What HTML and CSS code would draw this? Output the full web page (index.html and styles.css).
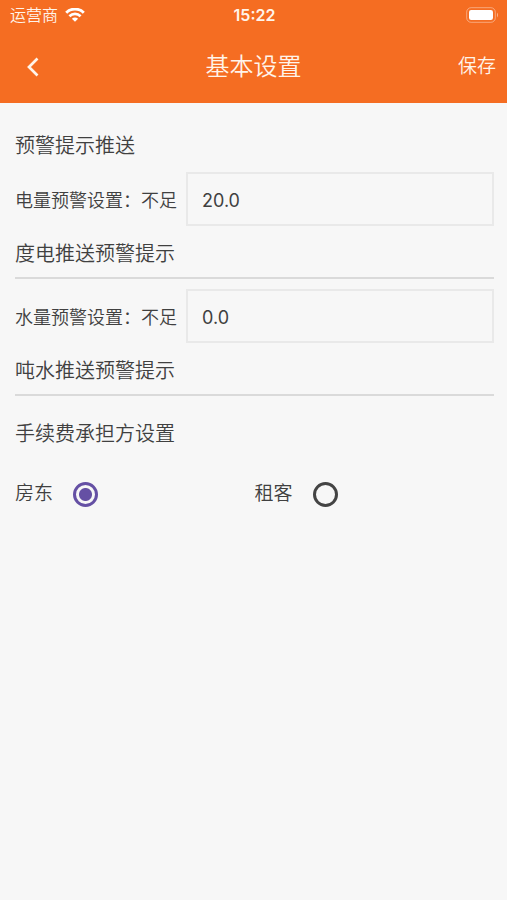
FILE: index.html
```html
<!DOCTYPE html>
<html lang="zh-CN">
<head>
<meta charset="utf-8">
<meta name="viewport" content="width=device-width, initial-scale=1">
<title>基本设置</title>
<link rel="stylesheet" href="styles.css">
</head>
<body>
<header class="header">
  <div class="status">
    <div class="carrier">
      <span>运营商</span>
      <svg class="wifi" viewBox="0 0 20 14" aria-hidden="true">
        <path d="M1.2 4.7C6 -.1 14 -.1 18.8 4.7" fill="none" stroke="currentColor" stroke-width="2.9"/>
        <path d="M4.400 8.200C7.600 5.200 12.400 5.200 15.600 8.200" fill="none" stroke="currentColor" stroke-width="2.7"/>
        <path d="M6.900 10.800C8.700 9.100 11.300 9.100 13.100 10.800L10 13.800Z" fill="currentColor"/>
      </svg>
    </div>
    <time class="clock">15:22</time>
    <svg class="battery" viewBox="0 0 33 16" aria-hidden="true">
      <rect x=".7" y=".7" width="28.6" height="14.6" rx="4.4" fill="none" stroke="#fff" stroke-opacity=".4"/>
      <rect x="3" y="3" width="24" height="10" rx="2.2" fill="#fff"/>
      <path d="M31 5.5Q33 8 31 10.500Z" fill="#fff" fill-opacity=".5"/>
    </svg>
  </div>
  <nav class="bar">
    <button class="back" type="button" aria-label="返回">
      <svg viewBox="0 0 12 20" aria-hidden="true"><path d="M10.500 1.500L2 10L10.500 18.500" fill="none" stroke="currentColor" stroke-width="2.7"/></svg>
    </button>
    <h1 class="title">基本设置</h1>
    <button class="save" type="submit" form="settings">保存</button>
  </nav>
</header>
<form class="settings" id="settings">
  <h2 class="heading">预警提示推送</h2>
  <section class="group">
    <div class="field">
      <label for="power">电量预警设置：不足</label>
      <input class="box" id="power" type="text" inputmode="decimal" value="20.0">
    </div>
    <p class="note">度电推送预警提示</p>
  </section>
  <section class="group">
    <div class="field">
      <label for="water">水量预警设置：不足</label>
      <input class="box" id="water" type="text" inputmode="decimal" value="0.0">
    </div>
    <p class="note">吨水推送预警提示</p>
  </section>
  <fieldset class="payer">
    <legend class="heading">手续费承担方设置</legend>
    <div class="options">
      <label class="option">房东<input class="radio" type="radio" name="payer" checked></label>
      <label class="option">租客<input class="radio" type="radio" name="payer"></label>
    </div>
  </fieldset>
</form>
</body>
</html>
```
FILE: styles.css
```css
* {
  box-sizing: border-box;
}

body {
  margin: 0;
  min-height: 100vh;
  background: #f7f7f7;
  color: #404040;
  font-family: Inter, "Noto Sans CJK SC", sans-serif;
  font-weight: 350;
}

button,
input {
  font: inherit;
  color: inherit;
}

.header {
  background: #f56d22;
  color: #fff4ea;
}

.status,
.bar {
  display: grid;
  grid-template-columns: 1fr auto 1fr;
  align-items: center;
}

.status {
  height: 28px;
  padding: 0 8px 0 10px;
}

.carrier {
  display: flex;
  align-items: center;
  gap: 7px;
  font-size: 16px;
  line-height: 30px;
}

.wifi {
  width: 20px;
  height: 14px;
  color: #fff;
}

.clock {
  font-size: 16px;
  font-weight: 600;
  line-height: 30px;
}

.battery {
  justify-self: end;
  width: 33px;
  height: 16px;
}

.bar {
  height: 75px;
  padding: 2px 11px 0;
}

.back,
.save {
  padding: 0;
  border: 0;
  background: none;
  cursor: pointer;
}

.back {
  display: flex;
  align-items: center;
  justify-content: center;
  width: 44px;
  height: 44px;
}

.back svg {
  width: 12px;
  height: 20px;
}

.title {
  margin: 0;
  font-size: 24px;
  font-weight: 350;
  line-height: 36px;
}

.save {
  justify-self: end;
  font-size: 19px;
  line-height: 28px;
}

.settings {
  padding: 28px 13px 28px 15px;
}

.heading,
.note {
  margin: 0;
  padding: 0;
  font-size: 20px;
  font-weight: 350;
  line-height: 30px;
}

.group {
  padding: 11px 0 8px;
  border-bottom: 2px solid #dadada;
}

.group + .group {
  padding-top: 10px;
}

.field {
  display: flex;
  align-items: center;
  gap: 9px;
  margin-bottom: 13px;
  font-size: 18px;
}

.field label {
  flex: none;
}

.box {
  flex: 1;
  min-width: 0;
  height: 54px;
  padding: 2px 14px 0;
  border: 2px solid #e9e9e9;
  border-radius: 0;
  background: transparent;
  outline: 0;
  font-weight: 400;
}

.payer {
  margin: 23px 0 0;
  padding: 0;
  border: 0;
}

.options {
  display: grid;
  grid-template-columns: 1fr 1fr;
  padding-top: 32px;
  font-size: 19px;
  line-height: 26px;
}

.option {
  display: flex;
  align-items: center;
  gap: 20px;
}

.radio {
  appearance: none;
  width: 25px;
  height: 25px;
  margin: 0;
  border: 3px solid #444;
  border-radius: 50%;
}

.radio:checked {
  border-color: #6550a4;
  background: radial-gradient(circle, #6550a4 6px, transparent 7px);
}
```
